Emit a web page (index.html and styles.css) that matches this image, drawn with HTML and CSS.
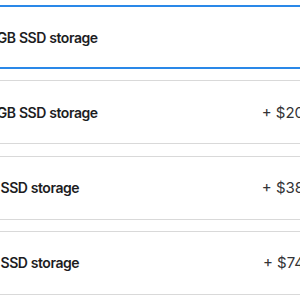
FILE: index.html
```
<!DOCTYPE html>
<html>
<head>
<meta charset="utf-8">
<link rel="stylesheet" href="styles.css">
</head>
<body>
<div class="list">
  <div class="option selected">
    <span class="label">256GB SSD storage</span>
  </div>
  <div class="option">
    <span class="label">512GB SSD storage</span>
    <span class="price">+ $200.00</span>
  </div>
  <div class="option">
    <span class="label">1TB SSD storage</span>
    <span class="price">+ $380.00</span>
  </div>
  <div class="option">
    <span class="label">2TB SSD storage</span>
    <span class="price">+ $740.00</span>
  </div>
</div>
</body>
</html>
```
FILE: styles.css
```
html, body {
  margin: 0;
  padding: 0;
  background: #fff;
  overflow: hidden;
}
body {
  width: 300px;
  height: 300px;
  font-family: Inter, "Noto Sans", sans-serif;
}
.list {
  display: flex;
  flex-direction: column;
  gap: 11.33px;
  padding-top: 5px;
  margin-left: -46px;
  width: 399px;
}
.option {
  box-sizing: border-box;
  height: 64px;
  border: 1px solid #d9d9d9;
  border-radius: 12px;
  display: flex;
  align-items: center;
  justify-content: space-between;
  padding: 0 16px;
}
.option.selected {
  border: 2px solid #2a88e8;
  padding: 0 15px;
}
.label {
  font-size: 14px;
  font-weight: 600;
  color: #1d1d1f;
  letter-spacing: -0.45px;
  font-variant-numeric: tabular-nums;
}
.price {
  font-size: 15px;
  font-weight: 400;
  color: #333336;
}
```
